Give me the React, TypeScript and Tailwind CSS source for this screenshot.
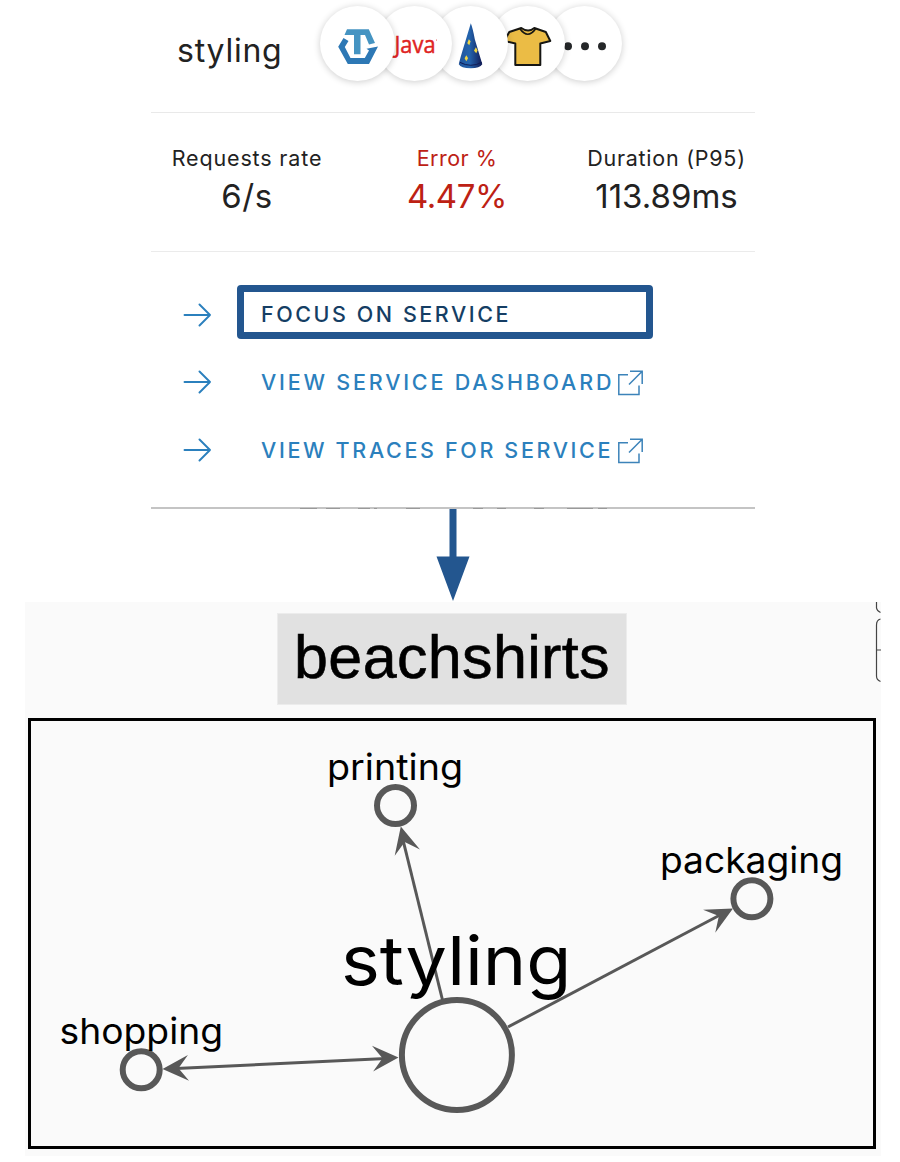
import type { ReactNode } from "react";

function Badge({ children, z }: { children?: ReactNode; z: string }) {
  return (
    <div className={`relative ${z} -mr-[18.3px] size-[75px] shrink-0 rounded-full bg-white shadow-[0_1px_7px_rgba(0,0,0,0.2)]`}>
      <svg viewBox="0 0 75 75" className="size-full overflow-visible">{children}</svg>
    </div>
  );
}

function Badges() {
  return (
    <div className="flex">
      <Badge z="z-50">
        <path d="M27 23.300H48.800L55 37L49 38.500L45 29H40.500V48.300H34V29H24.500Z" fill="#4594c2" />
        <path d="M23.500 32L28.500 35L24.800 41L30.500 52H44.800L49 44.500L46.500 42.700L58 40.500L49 58H27.800L18.200 40.700Z" fill="#2d78b5" />
      </Badge>
      <Badge z="z-40">
        <text x="17.500" y="46.500" textLength="41" lengthAdjust="spacingAndGlyphs" fontSize="24" fontFamily="Open Sans, sans-serif" fill="#df2423" stroke="#df2423" strokeWidth="0.5">Java</text>
        <circle cx="59.500" cy="34" r="0.5" fill="#df2423" />
      </Badge>
      <Badge z="z-30">
        <defs>
          <linearGradient id="hat" x1="0" x2="1">
            <stop offset="0" stopColor="#20549a" />
            <stop offset="0.45" stopColor="#2464ae" />
            <stop offset="1" stopColor="#111b56" />
          </linearGradient>
        </defs>
        <g transform="translate(0.800 0.300)">
          <path d="M37 17Q39 22 41 33L48.500 58Q46 62 37 62Q27 62 25 58Q26 53 31 37Z" fill="url(#hat)" />
          <path d="M26 56Q37 62 48 56" fill="none" stroke="#101b54" strokeWidth="1" />
          <g fill="#f1d643">
            <path d="M35 33L36.800 35L35.500 39L33.500 37Z" />
            <path d="M42 41L43.800 44L42.500 47L40.200 44.500Z" />
            <path d="M32.500 49L34.300 52L32.500 55L30.800 52Z" />
          </g>
        </g>
      </Badge>
      <Badge z="z-20">
        <g transform="translate(1.300 0)">
          <path d="M30 22L18 26L13 35L24 37.500V59H49V37.500L59 35L54.500 26L43 22Q37 27 30 22Z" fill="#ebbc45" stroke="#161613" strokeWidth="2" strokeLinejoin="round" />
          <path d="M28.500 22.500Q36.500 34 44.500 22.500" fill="none" stroke="#161613" strokeWidth="1.700" />
        </g>
      </Badge>
      <Badge z="z-10">
        <g fill="#252729">
          <circle cx="21" cy="40.300" r="4" />
          <circle cx="38" cy="40.300" r="4" />
          <circle cx="55" cy="40.300" r="4" />
        </g>
      </Badge>
    </div>
  );
}

function Metric({ label, value, className, labelClass, valueClass }: { label: string; value: string; className: string; labelClass: string; valueClass: string }) {
  return (
    <div className={`flex flex-col items-center whitespace-nowrap ${className}`}>
      <span className={`text-[21.5px] leading-[28px] ${labelClass}`}>{label}</span>
      <span className={`mt-[3px] text-[33px] leading-[42px] ${valueClass}`}>{value}</span>
    </div>
  );
}

function ArrowRight() {
  return (
    <svg viewBox="0 0 28 24" className="h-6 w-7 shrink-0" fill="none" stroke="#2b80bd" strokeWidth="1.9" strokeLinecap="round" strokeLinejoin="round">
      <path d="M1.500 12H27M16.500 1.500L27 12L16.500 22.500" />
    </svg>
  );
}

function External() {
  return (
    <svg viewBox="0 0 26 26" className="mt-[1px] h-[26px] w-[26px] shrink-0" fill="none" stroke="#3c83b9" strokeWidth="1.5">
      <path d="M11 4.700H1.800V24.500H22V15.500M13 1.300H25.200V14M25.200 1.300L12 14.500" />
    </svg>
  );
}

function Graph() {
  return (
    <svg viewBox="0 0 847 431" className="h-[431px] w-[847px]" fontFamily="Inter, sans-serif">
      <g transform="translate(-29 -718)">
        <g stroke="#585858" strokeWidth="3">
          <path d="M442.500 1000L403 840" />
          <path d="M508 1027L720 915" />
          <path d="M176 1068.500L386 1058.500" />
        </g>
        <g fill="#585858">
          <path d="M0 0L-27 13L-16 0L-27 -13Z" transform="translate(400.800 826.500) rotate(-104)" />
          <path d="M0 0L-27 13L-16 0L-27 -13Z" transform="translate(733 908.500) rotate(-28)" />
          <path d="M0 0L-26 13L-16 0L-26 -13Z" transform="translate(398.500 1057.500) rotate(-2.500)" />
          <path d="M0 0L-26 13L-16 0L-26 -13Z" transform="translate(162.500 1069) rotate(177.500)" />
        </g>
        <g fill="#fafafa" stroke="#585858" strokeWidth="6">
          <circle cx="395.500" cy="805.500" r="18.500" />
          <circle cx="751.900" cy="898.700" r="18.500" />
          <circle cx="141.200" cy="1069.700" r="18.500" />
          <circle cx="456.900" cy="1055" r="55" />
        </g>
        <g fill="#000" fontSize="36">
          <text x="327" y="779.500" textLength="136" lengthAdjust="spacingAndGlyphs">printing</text>
          <text x="660" y="872.500" textLength="183" lengthAdjust="spacingAndGlyphs">packaging</text>
          <text x="59.500" y="1044" textLength="163.500" lengthAdjust="spacingAndGlyphs">shopping</text>
          <text x="341" y="985" textLength="230.500" lengthAdjust="spacingAndGlyphs" fontSize="68">styling</text>
        </g>
      </g>
    </svg>
  );
}

export default function App() {
  return (
    <main className="flex h-[1162px] w-[900px] flex-col overflow-hidden bg-white font-['Inter',sans-serif] text-[#222]">
      <section className="ml-[151px] flex h-[509px] w-[604px] shrink-0 flex-col border-b-2 border-[#c4c4c4]">
        <header className="flex h-[113px] shrink-0 items-start border-b-[1.5px] border-[#e9e9e9] pt-[6px] pl-[26px]">
          <h1 className="w-[143px] pt-[24px] text-[32px] leading-[42px] tracking-[0.75px]">styling</h1>
          <Badges />
        </header>
        <div className="flex h-[139px] shrink-0 border-b-[1.5px] border-[#ebebeb] pt-[31px]">
          <Metric label="Requests rate" value="6/s" className="w-[192px]" labelClass="tracking-[0.85px]" valueClass="tracking-[0.5px]" />
          <Metric label="Error %" value="4.47%" className="w-[228px] text-[#bd2114]" labelClass="tracking-[0.5px]" valueClass="tracking-[-0.4px]" />
          <Metric label="Duration (P95)" value="113.89ms" className="w-[191px] -mr-2" labelClass="tracking-[0.75px]" valueClass="tracking-[0px]" />
        </div>
        <nav className="flex flex-col pt-[33px] pl-[32px] text-[21.5px] font-medium text-[#2b80bd]">
          <a className="flex h-[54px] items-center gap-[26px]">
            <span className="pt-[6px]"><ArrowRight /></span>
            <span className="flex h-[54px] w-[416px] items-center rounded-[4px] border-[7px] border-[#23568f] pt-[5px] pl-[17px] tracking-[2.55px] text-[#153e64]">FOCUS ON SERVICE</span>
          </a>
          <a className="mt-[16px] flex h-[54px] items-center">
            <ArrowRight />
            <span className="ml-[50px] w-[356px] whitespace-nowrap tracking-[2.8px]">VIEW SERVICE DASHBOARD</span>
            <External />
          </a>
          <a className="mt-[14px] flex h-[54px] items-center">
            <ArrowRight />
            <span className="ml-[50px] w-[356px] whitespace-nowrap tracking-[2.65px]">VIEW TRACES FOR SERVICE</span>
            <External />
          </a>
        </nav>
      </section>
      <svg viewBox="0 0 604 93" className="ml-[151px] h-[93px] w-[604px] shrink-0 overflow-visible">
        <path d="M149 -.5h17m9 0h14m18 0h12m4 0h3m29 0h14m53 0h10m14 0h9m28 0h10m23 0h26m5 0h9" stroke="#999" />
        <path d="M298.500 0H305.500V47.500H318.500L302 92L285.500 47.500H298.500Z" fill="#23568f" />
      </svg>
      <section className="ml-[25px] flex h-[554px] w-[856px] shrink-0 flex-col bg-[#fafafa]">
        <div className="flex h-[116px] shrink-0 justify-between">
          <h2 className="mt-[11px] ml-[252px] flex h-[92px] w-[350px] items-center justify-center border border-[#ececec] bg-[#e1e1e1] font-['Liberation_Sans',sans-serif] text-[61px] tracking-[0.35px] text-black [-webkit-text-stroke:0.6px_black]"><span className="-mt-[3px]">beachshirts</span></h2>
          <svg viewBox="0 0 6 116" className="h-[116px] w-[6px]" fill="none" stroke="#444" strokeWidth="1.200">
            <path d="M1.500 0V6Q2 9 5.500 10.500M5.500 17Q1.500 18 1.500 23V74Q1.500 78 5.500 79.500M1.500 48H6" />
          </svg>
        </div>
        <div className="ml-[3px] h-[431px] w-[848px] border-[3px] border-black">
          <div className="-mt-[3px] -ml-[2.5px]"><Graph /></div>
        </div>
      </section>
    </main>
  );
}
